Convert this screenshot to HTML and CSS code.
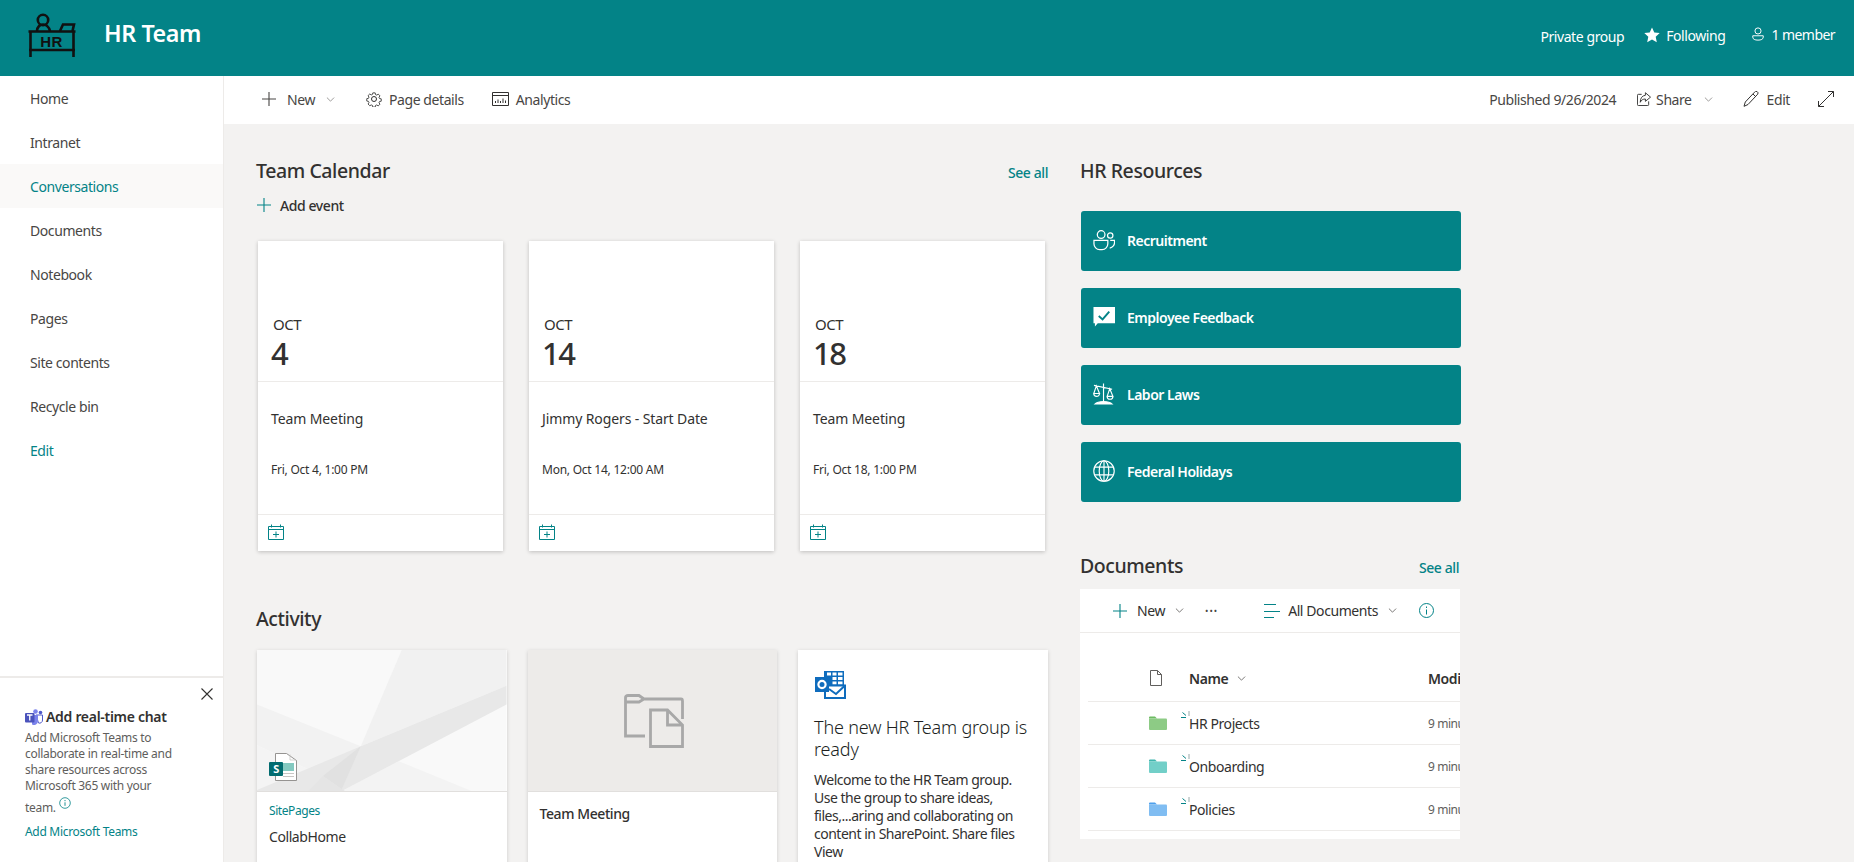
FILE: index.html
```html
<!DOCTYPE html>
<html lang="en">
<head>
<meta charset="utf-8">
<title>HR Team</title>
<link rel="stylesheet" href="styles.css">
</head>
<body>
<svg class="defs" width="0" height="0">
  <symbol id="plus" viewBox="0 0 14 14"><path d="M7 0v14M0 7h14" fill="none" stroke="currentColor" stroke-width="1.1"/></symbol>
  <symbol id="chev" viewBox="0 0 10 6"><path d="M.7.7 5 5l4.3-4.3" fill="none" stroke="currentColor" stroke-width="1"/></symbol>
  <symbol id="calplus" viewBox="0 0 16 16"><path d="M.5 2.500h15v13H.5zM.5 5.500h15M3.500 .5v3M12.500 .5v3M8 7.500v6M5 10.500h6" fill="none" stroke="currentColor" stroke-width="1"/></symbol>
  <symbol id="spin" viewBox="0 0 10 10"><path d="M0 6.500h5M1.500 1.500 5 4.500" fill="none" stroke="#038387" stroke-width="1"/><path d="M8 0v5" stroke="#9aa" stroke-width="1"/></symbol>
  <symbol id="folder" viewBox="0 0 18 14"><path class="ftab" d="M0 1.500A1 1 0 0 1 1 .5h5l2 2h-8z"/><path class="fbody" d="M0 2.500h17a1 1 0 0 1 1 1v9.500a1 1 0 0 1-1 1H1a1 1 0 0 1-1-1z"/></symbol>
</svg>

<header class="site-head">
  <svg class="logo" viewBox="0 0 48 46" fill="none" stroke="#111" stroke-width="2.600">
    <circle cx="15" cy="8" r="5.200"/>
    <path d="M9 19c0-4 3-6.500 6-6.500s6 2.500 7 6.500M32 19l3-6.500h11l-1.500 6.500"/>
    <path d="M.5 19.500h47M2.500 19.500V45M45.500 19.500V45M1 38h46"/>
    <text x="23.500" y="35" class="logo-text" text-anchor="middle">HR</text>
  </svg>
  <div class="site-title">HR Team</div>
  <div class="head-meta">
    <span class="hm-private">Private group</span>
    <span class="hm-follow">
      <svg class="ic16" viewBox="0 0 16 16"><path d="m8 .5 2.300 5 5.400.6-4 3.700 1.100 5.400L8 12.500l-4.800 2.700 1.100-5.400-4-3.700 5.400-.6z" fill="#fff"/></svg>
      Following</span>
    <span class="hm-member">
      <svg class="ic14" viewBox="0 0 14 16" fill="none" stroke="#fff" stroke-width="1.100"><circle cx="7" cy="4.500" r="3.500"/><path d="M1 10h12v1.500c0 2.500-2.500 3.500-6 3.500s-6-1-6-3.500z"/></svg>
      1 member</span>
  </div>
</header>

<div class="shell">
  <nav class="side">
    <a class="nav-item">Home</a>
    <a class="nav-item">Intranet</a>
    <a class="nav-item nav-active">Conversations</a>
    <a class="nav-item">Documents</a>
    <a class="nav-item">Notebook</a>
    <a class="nav-item">Pages</a>
    <a class="nav-item">Site contents</a>
    <a class="nav-item">Recycle bin</a>
    <a class="nav-item nav-edit">Edit</a>
    <aside class="teams">
      <svg class="teams-close" viewBox="0 0 12 12"><path d="m.5.5 11 11M11.500.5l-11 11" stroke="#323130" stroke-width="1.100" fill="none"/></svg>
      <div class="teams-title">
        <svg class="teams-logo" viewBox="0 0 18 16"><circle cx="10.500" cy="2.500" r="2.300" fill="#7b83eb"/><circle cx="15.500" cy="3.500" r="1.800" fill="#5059c9"/><path d="M11 6h6.500v5a3 3 0 0 1-4 3z" fill="none" stroke="#5059c9"/><path d="M7 6h6v6a4 4 0 0 1-6 3.500z" fill="#7b83eb"/><rect x="0" y="4" width="9.500" height="9.500" rx="1" fill="#4b53bc"/><path d="M2 6h5.500M4.750 6v5.500" stroke="#fff" stroke-width="1.300"/></svg>
        Add real-time chat
      </div>
      <p class="teams-body">Add Microsoft Teams to collaborate in real-time and share resources across Microsoft 365 with your</p>
      <p class="teams-last">team.
        <svg class="teams-info" viewBox="0 0 12 12" fill="none" stroke="#038387"><circle cx="6" cy="6" r="5.300" stroke-width=".8"/><path d="M6 5.300v3.500M6 3v1.200" stroke-width=".9"/></svg>
      </p>
      <a class="teams-link">Add Microsoft Teams</a>
    </aside>
  </nav>

  <main class="main">
    <div class="cmdbar">
      <div class="cmd-group">
        <span class="cmd cmd-new"><svg class="ic14"><use href="#plus"/></svg>New<svg class="chev"><use href="#chev"/></svg></span>
        <span class="cmd cmd-details">
          <svg class="ic16" viewBox="0 0 16 16" fill="none" stroke="#323130" stroke-width="1"><circle cx="8" cy="8" r="2.500"/><path d="M6.600.8h2.800l.4 2 1.400.6 1.800-1.100 2 2-1.100 1.700.6 1.400 2 .4v2.800l-2 .4-.6 1.400 1.100 1.700-2 2-1.800-1.100-1.400.6-.4 2H6.600l-.4-2-1.400-.6L3 15.900l-2-2 1.100-1.700-.6-1.400-2-.4V7.600l2-.4.6-1.400L1 4.100l2-2 1.800 1.100 1.400-.6z" transform="translate(1.200 1.200) scale(.85)"/></svg>
          Page details</span>
        <span class="cmd cmd-analytics">
          <svg class="ic17" viewBox="0 0 17 14" fill="none" stroke="#323130" stroke-width="1"><path d="M.5.500h16v13H.5zM.5 3.500h16M3.500 11V9M6 11V7.500M8.500 11V9M11 11V6.500M13.500 11V8.500"/></svg>
          Analytics</span>
      </div>
      <div class="cmd-group">
        <span class="cmd-pub">Published 9/26/2024</span>
        <span class="cmd cmd-share">
          <svg class="ic14" viewBox="0 0 15 15" fill="none" stroke="#323130" stroke-width="1"><path d="M5 2.500H1.500a1 1 0 0 0-1 1v10a1 1 0 0 0 1 1h10a1 1 0 0 0 1-1V10"/><path d="M9 .8 14.500 5.500 9 10V7.500C6.500 7.500 4.500 8.500 3.500 11c0-4.500 2-7 5.500-7.500z"/></svg>
          Share<svg class="chev"><use href="#chev"/></svg></span>
        <span class="cmd cmd-edit">
          <svg class="ic16" viewBox="0 0 16 16" fill="none" stroke="#323130" stroke-width="1"><path d="M11.500 1.200a1.800 1.800 0 0 1 3.200 2L5 13.500l-4 1.800 1.300-4.300zM10 3l3 3"/></svg>
          Edit</span>
        <svg class="ic16 cmd-expand" viewBox="0 0 16 16" fill="none" stroke="#323130" stroke-width="1"><path d="M10 .5h5.500V6M15.500 .5l-15 15M.5 10v5.500H6"/></svg>
      </div>
    </div>

    <div class="canvas">
      <div class="col-left">
        <section class="cal">
          <div class="sec-head">
            <h2 class="sec-title">Team Calendar</h2>
            <a class="see-all">See all</a>
          </div>
          <div class="add-event"><svg class="ic14"><use href="#plus"/></svg>Add event</div>
          <div class="cal-cards">
            <article class="cal-card">
              <div class="cal-date"><span class="cal-mon">OCT</span><span class="cal-day">4</span></div>
              <div class="cal-info"><div class="cal-name">Team Meeting</div><div class="cal-when">Fri, Oct 4, 1:00 PM</div></div>
              <div class="cal-foot"><svg class="ic16"><use href="#calplus"/></svg></div>
            </article>
            <article class="cal-card">
              <div class="cal-date"><span class="cal-mon">OCT</span><span class="cal-day">14</span></div>
              <div class="cal-info"><div class="cal-name">Jimmy Rogers - Start Date</div><div class="cal-when">Mon, Oct 14, 12:00 AM</div></div>
              <div class="cal-foot"><svg class="ic16"><use href="#calplus"/></svg></div>
            </article>
            <article class="cal-card">
              <div class="cal-date"><span class="cal-mon">OCT</span><span class="cal-day">18</span></div>
              <div class="cal-info"><div class="cal-name">Team Meeting</div><div class="cal-when">Fri, Oct 18, 1:00 PM</div></div>
              <div class="cal-foot"><svg class="ic16"><use href="#calplus"/></svg></div>
            </article>
          </div>
        </section>

        <section class="activity">
          <h2 class="sec-title">Activity</h2>
          <div class="act-cards">
            <article class="act-card">
              <div class="act-img">
                <svg class="act-bg" viewBox="0 0 250 142" preserveAspectRatio="none">
                  <rect width="250" height="142" fill="#f9f9f9"/>
                  <path d="M145 0H250V36L104 97z" fill="#f1f1f1"/>
                  <path d="M0 55 104 97 85 141 66 127 0 96z" fill="#f2f2f2"/>
                  <path d="M0 96 66 127 52 142H0z" fill="#f4f4f4"/>
                  <path d="M85 142 142 112 215 142z" fill="#f3f3f3"/>
                  <path d="M250 36V55L85 142H0V141L104 97z" fill="#e8e8e8"/>
                  <path d="M104 97 85 140 66 127z" fill="#e1e1e1"/>
                  <path d="M66 127 85 140 88 142H52z" fill="#e5e5e5"/>
                </svg>
                <svg class="act-doc" viewBox="0 0 28 28">
                  <path d="M6.500.5h11l10 7v20h-21z" fill="#fff" stroke="#8a8886" stroke-width=".9"/>
                  <path d="M21 1.500V7h6" fill="none" stroke="#c8c6c4" stroke-width=".8"/>
                  <rect x="14" y="10" width="11" height="8" fill="#84c9c0"/>
                  <path d="M14 20.500h11M14 23.500h11" stroke="#c8c6c4"/>
                  <rect y="9" width="14" height="14" rx="1" fill="#036c70"/>
                  <text x="7" y="20" class="doc-s" text-anchor="middle">S</text>
                </svg>
              </div>
              <div class="act-body">
                <div class="act-site">SitePages</div>
                <div class="act-name">CollabHome</div>
              </div>
            </article>
            <article class="act-card">
              <div class="act-img act-img-plain">
                <svg class="act-folder" viewBox="0 0 60 54" fill="none" stroke="#a8a8a8" stroke-width="2.800">
                  <path d="M21 42H1.500V3.500Q1.500 1.500 4 1.500h11l5 3.500-5 3H1.500M20 5h37q1.500 0 1.500 2v18"/>
                  <path d="M26.500 16h17l15 15v21.500h-32zM43.500 16v15h15"/>
                </svg>
              </div>
              <div class="act-body act-body-plain">
                <div class="act-name">Team Meeting</div>
              </div>
            </article>
            <article class="act-card act-card-text">
              <svg class="outlook" viewBox="0 0 32 28">
                <rect x="10" width="20" height="15" fill="#0f6cbd"/>
                <path d="M13 1.500h4v3h-4zM18.500 1.500h4v3h-4zM24 1.500h4.500v3H24zM18.500 6h4v3h-4zM24 6h4.500v3H24zM18.500 10.500h4v3h-4zM24 10.500h4.500v3H24z" fill="#fff"/>
                <path d="M11 14.500h20V27H11z" fill="#fff" stroke="#0f6cbd" stroke-width="2"/>
                <path d="M15 18l7 5 9-8.500" fill="none" stroke="#0f6cbd" stroke-width="2"/>
                <rect x="1" y="6" width="14" height="15" fill="#0f6cbd"/>
                <circle cx="8" cy="13.500" r="3.600" fill="none" stroke="#fff" stroke-width="2.200"/>
              </svg>
              <h3 class="act-head">The new HR Team group is ready</h3>
              <p class="act-text">Welcome to the HR Team group. Use the group to share ideas, files,...aring and collaborating on content in SharePoint. Share files View</p>
            </article>
          </div>
        </section>
      </div>

      <div class="col-right">
        <section class="res">
          <h2 class="sec-title">HR Resources</h2>
          <div class="res-list">
            <a class="res-item">
              <svg class="res-ic" viewBox="0 0 23 21" fill="none" stroke="#fff" stroke-width="1.300"><circle cx="8.500" cy="4.800" r="4"/><circle cx="18" cy="5.800" r="2.800"/><path d="M1 11h14.500v3.500a6 6 0 0 1-6 6h-2.500a6 6 0 0 1-6-6zM18 11h4.500v1.500a6 6 0 0 1-5 6.500"/></svg>
              Recruitment
            </a>
            <a class="res-item">
              <svg class="res-ic" viewBox="0 0 23 21"><path d="M.5 0H23v17H5l-3 3.500V17H.5z" fill="#fff"/><path d="m6 9.500 4 3.500 7-8" fill="none" stroke="#038387" stroke-width="2"/></svg>
              Employee Feedback
            </a>
            <a class="res-item">
              <svg class="res-ic" viewBox="0 0 23 23" fill="none" stroke="#fff" stroke-width="1.200"><path d="M1 2.500 20 6.500M11 .5V20M3.500 3 .8 11h6zM17.500 6 14.800 14h6zM.8 11a3 3 0 0 0 6 0zM14.800 14a3 3 0 0 0 6 0z"/><path d="M2 22c2-2 5-2.500 9-2.500s7 .5 9 2.500z" fill="#fff"/></svg>
              Labor Laws
            </a>
            <a class="res-item">
              <svg class="res-ic" viewBox="0 0 23 23" fill="none" stroke="#fff" stroke-width="1.200"><circle cx="11.500" cy="11.500" r="10.700"/><ellipse cx="11.500" cy="11.500" rx="5" ry="10.700"/><path d="M2 7.500h19M2 15.500h19M11.500 .8v21.400"/></svg>
              Federal Holidays
            </a>
          </div>
        </section>

        <section class="docs">
          <div class="sec-head">
            <h2 class="sec-title">Documents</h2>
            <a class="see-all see-all-docs">See all</a>
          </div>
          <div class="doc-panel">
            <div class="doc-bar">
              <svg class="ic14 teal"><use href="#plus"/></svg>
              <span class="db-new">New</span>
              <svg class="chev"><use href="#chev"/></svg>
              <span class="db-dots">•••</span>
              <svg class="db-lines" viewBox="0 0 16 14" fill="none" stroke="#038387"><path d="M0 .5h12M0 7.500h16M0 13.500h10"/></svg>
              <span class="db-view">All Documents</span>
              <svg class="chev"><use href="#chev"/></svg>
              <svg class="db-info" viewBox="0 0 15 15" fill="none" stroke="#038387"><circle cx="7.500" cy="7.500" r="7"/><path d="M7.500 6.500v5M7.500 3.500v1.500"/></svg>
            </div>
            <div class="doc-row doc-row-head">
              <svg class="doc-file" viewBox="0 0 12 16" fill="none" stroke="#605e5c"><path d="M.5.500h7l4 4v11h-11zM7.500.500v4h4"/></svg>
              <span class="doc-hname">Name<svg class="chev"><use href="#chev"/></svg></span>
              <span class="doc-hmod">Modified</span>
            </div>
            <div class="doc-row">
              <svg class="doc-folder f-green"><use href="#folder"/></svg>
              <span class="doc-name"><svg class="doc-spin"><use href="#spin"/></svg>HR Projects</span>
              <span class="doc-mod">9 minutes ago</span>
            </div>
            <div class="doc-row">
              <svg class="doc-folder f-teal"><use href="#folder"/></svg>
              <span class="doc-name"><svg class="doc-spin"><use href="#spin"/></svg>Onboarding</span>
              <span class="doc-mod">9 minutes ago</span>
            </div>
            <div class="doc-row">
              <svg class="doc-folder f-blue"><use href="#folder"/></svg>
              <span class="doc-name"><svg class="doc-spin"><use href="#spin"/></svg>Policies</span>
              <span class="doc-mod">9 minutes ago</span>
            </div>
          </div>
        </section>
      </div>
    </div>
  </main>
</div>
</body>
</html>
```
FILE: styles.css
```css
* { box-sizing: border-box; }
html, body { margin: 0; height: 100%; }
body {
  height: 862px;
  overflow: hidden;
  display: flex;
  flex-direction: column;
  font-family: "Noto Sans", "Open Sans", "Liberation Sans", sans-serif;
  font-size: 14px;
  letter-spacing: -0.03em;
  color: #323130;
  background: #f3f2f1;
}
.defs { position: absolute; }
svg { display: block; flex: none; }
.ic14 { width: 14px; height: 14px; }
.ic16 { width: 16px; height: 16px; }
.ic17 { width: 17px; height: 14px; }
.chev { width: 9px; height: 5px; color: #8a8886; }
.teal { color: #038387; }

/* Header */
.site-head {
  height: 76px;
  flex: none;
  background: #038387;
  color: #fff;
  display: flex;
  align-items: center;
  padding: 0 19px 0 28px;
}
.logo { width: 48px; height: 46px; margin-top: -7px; }
.logo-text { font: 700 15px "Liberation Sans", sans-serif; fill: #111; stroke: none; letter-spacing: .5px; }
.site-title { margin: -10px 0 0 28px; font-size: 23.3px; font-weight: 600; line-height: 32px; }
.head-meta { margin-left: auto; display: flex; align-items: center; font-size: 14px; margin-top: -6px; }
.hm-private { margin-right: 20px; margin-top: 2px; }
.hm-follow { display: flex; align-items: center; gap: 6px; margin-right: 26px; }
.hm-member { display: flex; align-items: center; gap: 6px; margin-top: -2px; letter-spacing: -0.04em; }

/* Shell */
.shell { flex: 1; display: flex; min-height: 0; }

/* Side nav */
.side {
  width: 224px;
  flex: none;
  background: #fff;
  border-right: 1px solid #edebe9;
  display: flex;
  flex-direction: column;
}
.nav-item {
  height: 44px;
  flex: none;
  padding-left: 30px;
  display: flex;
  align-items: center;
  color: #484644;
}
.nav-active { background: #faf9f8; color: #038387; }
.nav-edit { color: #038387; }
.teams {
  position: relative;
  margin-top: auto;
  height: 186px;
  border-top: 2px solid #edebe9;
  padding: 30px 30px 0 25px;
  font-size: 12px;
  line-height: 16px;
  color: #605e5c;
  letter-spacing: -0.025em;
}
.teams-close { position: absolute; top: 10px; right: 10px; width: 12px; height: 12px; }
.teams-title { display: flex; align-items: center; gap: 3px; font-size: 14px; font-weight: 600; color: #323130; line-height: 18px; }
.teams-logo { width: 18px; height: 16px; }
.teams-body { margin: 4px 0 0; }
.teams-last { margin: 6px 0 0; display: flex; gap: 3px; }
.teams-info { width: 12px; height: 12px; margin-top: -3px; }
.teams-link { display: block; color: #038387; margin-top: 8px; }

/* Main */
.main { flex: 1; min-width: 0; display: flex; flex-direction: column; overflow: hidden; }
.cmdbar {
  height: 48px;
  flex: none;
  background: #fff;
  display: flex;
  align-items: center;
  justify-content: space-between;
  padding: 0 20px 2px 38px;
  color: #484644;
}
.cmd-group { display: flex; align-items: center; }
.cmd { display: flex; align-items: center; }
.cmd-new { gap: 11px; margin-right: 31px; }
.cmd-details { gap: 7px; margin-right: 28px; }
.cmd-analytics { gap: 7px; }
.cmd-pub { margin-right: 21px; }
.cmd-share { gap: 5px; margin-right: 30px; }
.cmd-share .chev { margin-left: 7px; }
.cmd-edit { gap: 8px; margin-right: 28px; }

/* Canvas */
.canvas { flex: 1; min-height: 0; display: flex; padding: 33px 0 0 32px; overflow: hidden; }
.col-left { width: 792px; flex: none; }
.col-right { width: 381px; flex: none; margin-left: 32px; }
.sec-title { margin: 0; font-size: 19.5px; font-weight: 500; line-height: 27px; color: #323130; }
.sec-head { display: flex; justify-content: space-between; align-items: center; height: 27px; }
.see-all { font-weight: 500; font-size: 14px; color: #038387; margin-top: 3px; }
.see-all-docs { margin-right: 2px; }

/* Calendar */
.add-event { display: flex; align-items: center; gap: 9px; height: 28px; margin-top: 7px; font-weight: 500; }
.add-event .ic14 { color: #038387; margin-left: 1px; }
.cal-cards { display: flex; gap: 26px; margin: 22px 0 0 2px; }
.cal-card {
  width: 245px;
  height: 310px;
  background: #fff;
  box-shadow: 0 1px 4px rgba(0, 0, 0, .22);
  display: flex;
  flex-direction: column;
}
.cal-date {
  height: 141px;
  flex: none;
  border-bottom: 1px solid #edebe9;
  display: flex;
  flex-direction: column;
  justify-content: flex-end;
  padding: 0 0 8px 13px;
}
.cal-mon { font-size: 15px; line-height: 18px; margin-left: 2px; }
.cal-day { font-size: 31px; line-height: 40px; font-weight: 500; letter-spacing: -0.05em; }
.cal-info { flex: 1; padding: 27px 13px 0; }
.cal-name { font-size: 14px; line-height: 20px; letter-spacing: -0.008em; }
.cal-when { font-size: 12px; line-height: 16px; margin-top: 33px; letter-spacing: -0.02em; }
.cal-foot { height: 37px; flex: none; border-top: 1px solid #edebe9; padding: 9px 0 0 10px; color: #038387; }

/* Activity */
.activity { margin-top: 54px; }
.act-cards { display: flex; gap: 21px; margin: 18px 0 0 1px; }
.act-card {
  width: 249.5px;
  height: 300px;
  flex: none;
  background: #fff;
  box-shadow: 0 1px 4px rgba(0, 0, 0, .16);
}
.act-img { position: relative; height: 142px; border-bottom: 1px solid #e1dfdd; }
.act-bg { width: 100%; height: 100%; }
.act-doc { position: absolute; left: 12px; top: 103px; width: 28px; height: 28px; }
.doc-s { font: 700 11px "Noto Sans", sans-serif; fill: #fff; }
.act-img-plain { background: #edebe9; display: flex; justify-content: center; padding-top: 44px; }
.act-folder { width: 60px; height: 54px; margin-left: 3px; }
.act-body { padding: 11px 12px 0; }
.act-body-plain { padding: 12px 12px 0; }
.act-site { font-size: 12px; line-height: 16px; color: #038387; }
.act-name { font-size: 14px; line-height: 20px; margin-top: 8px; }
.act-body-plain .act-name { margin-top: 0; font-weight: 500; }
.act-card-text { padding: 21px 12px 0 16px; }
.outlook { width: 32px; height: 28px; }
.act-head { margin: 17px 0 0; font-size: 18px; font-weight: 300; line-height: 22px; letter-spacing: -0.01em; color: #201f1e; }
.act-text { margin: 11px 0 0; font-size: 14px; line-height: 18px; font-weight: 400; letter-spacing: -0.035em; }

/* Resources */
.res-list { display: flex; flex-direction: column; gap: 17px; margin: 27px 0 0 1px; }
.res-item {
  height: 60px;
  background: #038387;
  color: #fff;
  font-weight: 600;
  letter-spacing: -0.035em;
  border-radius: 3px;
  display: flex;
  align-items: center;
  gap: 12px;
  padding: 0 0 2px 12px;
}
.res-ic { width: 22px; height: 22px; }

/* Documents */
.docs { margin-top: 50px; }
.doc-panel { margin-top: 10px; width: 380px; height: 250px; background: #fff; overflow: hidden; }
.doc-bar {
  height: 44px;
  border-bottom: 1px solid #edebe9;
  display: flex;
  align-items: center;
  padding-left: 33px;
}
.doc-bar .chev, .doc-hname .chev { color: #605e5c; }
.db-new { margin: 0 10px; }
.db-dots { margin: 0 46px 0 21px; font-size: 9px; letter-spacing: 1px; color: #484644; }
.db-lines { width: 16px; height: 14px; margin-right: 8px; }
.db-view { margin-right: 10px; }
.db-info { width: 15px; height: 15px; margin-left: 22px; }
.doc-row {
  position: relative;
  margin-left: 8px;
  width: 372px;
  height: 43px;
  display: grid;
  grid-template-columns: 61px 40px 239px 200px;
  align-items: center;
  border-bottom: 1px solid #edebe9;
  white-space: nowrap;
  overflow: hidden;
}
.doc-row-head { height: 69px; font-weight: 600; padding-top: 22px; }
.doc-file { grid-column: 1 / 3; width: 12px; height: 16px; margin-left: 62px; grid-row: 1; }
.doc-hname { grid-column: 3; grid-row: 1; display: flex; align-items: center; gap: 9px; }
.doc-hmod { grid-column: 4; grid-row: 1; }
.doc-folder { grid-column: 1 / 3; grid-row: 1; width: 18px; height: 14px; margin-left: 61px; }
.doc-name { grid-column: 3; grid-row: 1; position: relative; }
.doc-spin { position: absolute; left: -8px; top: -3px; width: 10px; height: 10px; }
.doc-mod { grid-column: 4; grid-row: 1; font-size: 12px; color: #605e5c; }
.ftab { fill: var(--ftab); }
.fbody { fill: var(--fbody); }
.f-green { --ftab: #6dbb62; --fbody: #8dcb85; }
.f-teal { --ftab: #3fb5ad; --fbody: #72cfc8; }
.f-blue { --ftab: #4ea0ec; --fbody: #80bdf2; }
```
